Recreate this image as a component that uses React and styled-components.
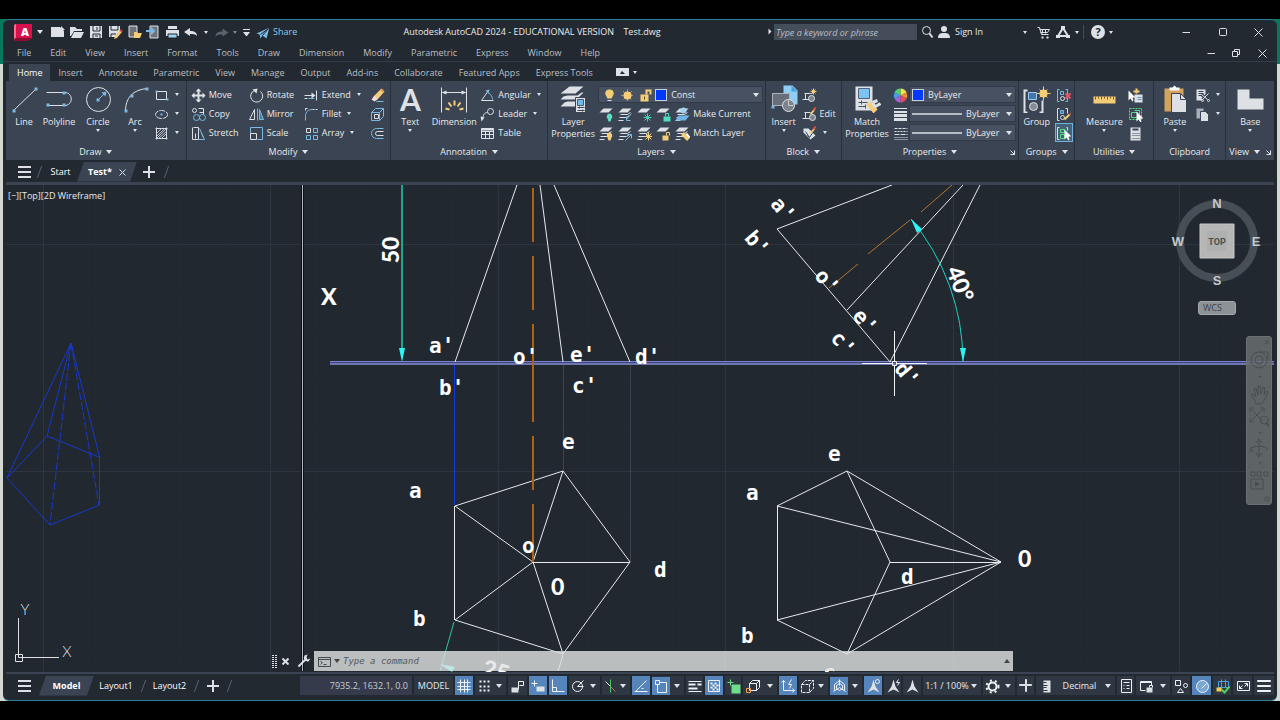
import styled, { createGlobalStyle, css } from 'styled-components';

const GlobalStyles = createGlobalStyle`
	* {
		box-sizing: border-box;
	}
	body {
		margin: 0;
		background: #000;
		color: #e8ebee;
		font-family: 'Open Sans', sans-serif;
		font-size: 9px;
		line-height: 12px;
	}
	button, input, select {
		font: inherit;
		color: inherit;
		background: none;
		border: none;
		padding: 0;
		margin: 0;
	}
	svg {
		display: block;
		flex: none;
	}
`;

const Desktop = styled.div`
	height: 100vh;
	display: flex;
	flex-direction: column;
	border: solid #000;
	border-width: 19px 0;
	padding: 0 3px;
	background: linear-gradient(#08785c 45px, #d3d8d0 45px);
`;

const Window = styled.div`
	flex: 1;
	min-height: 0;
	display: flex;
	flex-direction: column;
	background: #222930;
	border: solid #2c7f97;
	border-width: 1px 0;
	border-radius: 6px;
	overflow: hidden;
`;

const Row = styled.div`
	display: flex;
	align-items: center;
`;

const Caret = styled.i`
	flex: none;
	width: 0;
	height: 0;
	border: solid transparent;
	border-width: ${(p) => (p.$big ? '4px 3px 0' : '3px 2px 0')};
	border-top-color: #dfe2e6;
	opacity: ${(p) => (p.$dim ? 0.5 : 1)};
`;

/* title bar */

const TitleBar = styled.header`
	flex: none;
	height: 24px;
	display: flex;
	align-items: center;
	padding-left: 11px;
`;

const AppButton = styled.button`
	display: flex;
	align-items: center;
	width: 34px;
	gap: 4px;
`;

const ToolButton = styled.button`
	flex: none;
	display: flex;
	align-items: center;
	justify-content: center;
	gap: 4px;
	width: ${(p) => p.$w || 19}px;
	height: 18px;
`;

const ShareButton = styled.button`
	display: flex;
	align-items: center;
	gap: 4px;
	margin-left: 4px;
	color: #84cdf2;
`;

const SignInButton = styled.button`
	flex: none;
	width: 94px;
	display: flex;
	align-items: center;
	gap: 4px;
	padding: 0 4px 0 0;
	i {
		margin-left: auto;
	}
`;

const Title = styled.h1`
	flex: 1;
	margin: 0;
	font-size: 9px;
	font-weight: 400;
	text-align: center;
	white-space: pre;
`;

const SearchBox = styled.input`
	width: 143px;
	height: 16px;
	margin-left: 2px;
	padding: 0 2px;
	background: #454c5a;
	font-style: italic;
	&::placeholder {
		color: #b9bec6;
	}
`;

const Divider = styled.span`
	width: 1px;
	height: 14px;
	margin: 0 3px;
	background: #454c54;
`;

/* menu and ribbon tabs */

const MenuBar = styled.nav`
	flex: none;
	height: 18px;
	display: flex;
	align-items: center;
	gap: 19px;
	padding: 1px 0 0 14px;
	color: #b9bfc6;
	border-bottom: 1px solid #343c45;
`;

const WindowButtons = styled.div`
	margin-left: ${(p) => (p.$gap ? `${p.$gap}px` : 'auto')};
	display: flex;
	padding-right: 2px;
`;

const RibbonTabs = styled.div`
	flex: none;
	height: 19px;
	display: flex;
	align-items: flex-end;
	padding-left: 6px;
	color: #b9bfc6;
`;

const RibbonTab = styled.button`
	height: 17px;
	padding: 0 8px;
	${(p) =>
		p.$active &&
		css`
			background: #3b4453;
			color: #fff;
		`}
`;

/* ribbon */

const Ribbon = styled.div`
	flex: none;
	height: 79px;
	display: flex;
	margin: 0 3px;
	background: #3b4453;
`;

const PanelBox = styled.section`
	flex: ${(p) => p.$w} 1 0;
	min-width: 0;
	display: flex;
	flex-direction: column;
	border-right: 1px solid #29303a;
	&:last-child {
		border: none;
	}
`;

const PanelBody = styled.div`
	flex: 1;
	display: flex;
	padding: 4px 0 0 ${(p) => p.$pad}px;
`;

const PanelFooter = styled.div`
	height: 17px;
	display: flex;
	align-items: center;
	justify-content: ${(p) => (p.$start ? 'flex-start' : 'center')};
	padding-top: 1px;
	padding-left: ${(p) => (p.$start ? 3 : 0)}px;
	gap: 5px;
	position: relative;
`;

const Launcher = styled.button`
	position: absolute;
	right: 3px;
	top: 6px;
`;

const BigButton = styled.button`
	flex: none;
	width: ${(p) => p.$w}px;
	display: flex;
	flex-direction: column;
	align-items: center;
	align-self: flex-start;
	white-space: nowrap;
	svg {
		margin-bottom: 3px;
	}
	i {
		margin-top: 1px;
	}
`;

const Column = styled.div`
	flex: ${(p) => (p.$w ? `none` : 1)};
	width: ${(p) => (p.$w ? `${p.$w}px` : 'auto')};
	min-width: 0;
	display: flex;
	flex-direction: column;
`;

const SmallButton = styled.button`
	height: 19px;
	display: flex;
	align-items: center;
	gap: 3px;
	white-space: nowrap;
	i {
		margin-left: 3px;
	}
	${(p) =>
		p.$on &&
		css`
			background: #46617a;
			outline: 1px solid #6fb0dc;
			outline-offset: -1px;
		`}
`;

const Combo = styled.label`
	height: 17px;
	margin: 1px 2px 1px 0;
	display: flex;
	align-items: center;
	gap: 2px;
	padding: 0 3px 0 2px;
	background: #485161;
	border: 1px solid #323a47;
	select {
		flex: 1;
		min-width: 0;
		appearance: none;
		outline: none;
		padding-left: 2px;
	}
`;

const Swatch = styled.span`
	flex: none;
	width: 12px;
	height: 12px;
	background: #0038ff;
	border: 1px solid #c9ced6;
`;

const LineSample = styled.span`
	flex: none;
	width: 50px;
	height: 2px;
	background: #b6bbc5;
`;

/* file and layout tabs */

const TabStrip = styled.div`
	flex: none;
	height: 22px;
	display: flex;
	align-items: center;
	padding: 1px 0 0 12px;
`;

const SlantTab = styled.div`
	height: 20px;
	display: flex;
	align-items: center;
	justify-content: center;
	gap: 6px;
	width: ${(p) => p.$w}px;
	background: #3b4453;
	clip-path: polygon(7px 0, 100% 0, calc(100% - 7px) 100%, 0 100%);
	font-weight: 700;
	color: #fff;
`;

const PlainTab = styled.button`
	width: ${(p) => p.$w}px;
	text-align: center;
	color: #fff;
`;

const Slash = styled.span`
	flex: none;
	width: 1px;
	height: 12px;
	background: #59616b;
	transform: skewX(-20deg);
`;

/* drawing area */

const Canvas = styled.main`
	flex: 1;
	min-height: 0;
	position: relative;
	margin: 0 3px;
	overflow: hidden;
	border: solid #3b4453;
	border-width: 3px 0 2px;
	background: #212830;
`;

const Drawing = styled.svg`
	position: absolute;
	inset: 0;
	width: 100%;
	height: 100%;
`;

const ViewLabel = styled.span`
	position: absolute;
	left: 2px;
	top: 5px;
`;

const ViewCube = styled.svg`
	position: absolute;
	right: 10px;
	top: 8px;
`;

const WcsButton = styled.button`
	position: absolute;
	right: 38px;
	top: 116px;
	width: 38px;
	height: 14px;
	padding-left: 4px;
	border-radius: 3px;
	background: #8d9297;
	border: 1px solid #a4a8ac;
	color: #3d444b;
	line-height: 12px;
	text-align: left;
`;

const NavBar = styled.div`
	position: absolute;
	right: 2px;
	top: 151px;
	border-radius: 3px;
	border: 1px solid #6b7073;
	background: rgba(101, 106, 108, 0.9);
`;

const CommandBar = styled.div`
	position: absolute;
	left: 266px;
	right: 261px;
	bottom: 1px;
	height: 20px;
	display: flex;
	align-items: center;
`;

const CommandField = styled.div`
	flex: 1;
	height: 20px;
	display: flex;
	align-items: center;
	gap: 3px;
	padding: 0 3px;
	background: rgba(226, 227, 226, 0.8);
	input {
		flex: 1;
		outline: none;
		font-family: 'DejaVu Sans Mono', monospace;
		font-size: 9px;
		font-style: italic;
		color: #333;
	}
	input::placeholder {
		color: #55595c;
	}
	i {
		border-top-color: #444;
	}
	i:last-child {
		transform: rotate(180deg);
	}
`;

/* status bar */

const StatusBar = styled.footer`
	flex: none;
	height: 26px;
	display: flex;
	align-items: center;
	padding: 0 3px 3px 12px;
`;

const StatusItems = styled.div`
	margin-left: auto;
	display: flex;
	gap: 2px;
`;

const StatusItem = styled.button`
	flex: none;
	width: ${(p) => p.$w}px;
	height: 19px;
	display: flex;
	align-items: center;
	justify-content: ${(p) => (p.$caret ? 'space-between' : 'center')};
	padding-right: ${(p) => (p.$caret ? '4px' : 0)};
	white-space: nowrap;
	background: ${(p) => (p.$on && !p.$caret ? '#5585bb' : '#2f3742')};
	> svg {
		width: 18px;
		height: 18px;
		background: ${(p) => (p.$on ? '#5585bb' : 'none')};
	}
	> span {
		margin: 0 auto;
	}
`;

const Coords = styled.output`
	width: 112px;
	height: 19px;
	padding-right: 4px;
	line-height: 19px;
	text-align: right;
	background: #353b4b;
	color: #c7ccd3;
`;

/* icons */

const W = '#dde1e5';
const B = '#79b9e4';
const Y = '#f5cd76';

// odd-width strokes sit on whole coordinates, so the view is shifted by half a unit
const Icon = ({ w = 16, h = 16, shift = 0.5, children }) => (
	<svg
		width={w}
		height={h}
		viewBox={`${-shift} ${-shift} ${w} ${h}`}
		fill="none"
		stroke={W}
		aria-hidden="true"
	>
		{children}
	</svg>
);

const Logo = () => (
	<Icon w={19} h={17} shift={0}>
		<path d="M1 0h17v14l-4 2H1z" fill="#d8114c" stroke="none" />
		<path d="M0 1l2-1v14l-2 2z" fill="#ff6b8f" stroke="none" />
		<path d="M1 14h17l-4 3H0z" fill="#8e0c30" stroke="none" />
		<text
			x="11"
			y="12"
			fill="#fff"
			stroke="none"
			fontSize="11"
			fontWeight="800"
			textAnchor="middle"
		>
			A
		</text>
	</Icon>
);

const quick = {
	New: <path d="M1 3h9l4 4v6H1zM11 2l4 4h-4z" fill={W} stroke="none" />,
	Open: (
		<>
			<path d="M1 3h5l2 2h5v2H5l-3 5H1z" fill={W} stroke="none" />
			<path d="M5 8h10l-3 6H2z" fill={W} stroke="none" />
		</>
	),
	Save: (
		<>
			<path d="M2 2h12v12H2z" fill={W} stroke="none" />
			<path d="M5 2v5h7V2M5 14v-4h7v4" stroke="#222930" />
			<path d="M9 3v3M7 12h3" stroke="#222930" />
		</>
	),
	'Save As': (
		<>
			<path d="M2 2h11v5l-5 6H2z" fill={W} stroke="none" />
			<path d="M4 2v4h7V2M4 14v-4h5" stroke="#222930" />
			<path d="M13 6l2 2-5 6-3 1 1-3z" fill={Y} stroke="none" />
			<path d="M13 6l2 2" stroke="#e5513d" strokeWidth="2" />
		</>
	),
	'Open from Web': (
		<>
			<path d="M3 2h8v11H3z" fill="#6d747c" stroke={W} />
			<path d="M8 8h3l1 1h4l-2 5H8z" fill={Y} stroke="none" />
		</>
	),
	'Save to Web': (
		<>
			<path d="M5 2h8v12H5z" fill="#6d747c" stroke={W} />
			<path d="M1 7h7M6 4l3 3-3 3" stroke={B} strokeWidth="2" />
		</>
	),
	Plot: (
		<>
			<path d="M4 2h9v3H4z" fill={W} stroke="none" />
			<path d="M2 6h13v6H2z" fill={W} stroke="none" />
			<path d="M4 10h9v4H4z" fill="#9cd3f5" stroke="#222930" />
		</>
	),
	Undo: (
		<path
			d="M1 8l6-4v3c5 0 7 2 7 5-2-2-4-2-7-2v2z"
			fill={W}
			stroke="none"
		/>
	),
};

const big = {
	line: (
		<Icon w={28} h={28}>
			<path d="M3 25L26 3" />
			<path d="M2 24h3v3H2zM24 2h3v3h-3z" fill={B} stroke="none" />
		</Icon>
	),
	polyline: (
		<Icon w={28} h={28}>
			<path d="M2 20h17c9 0 9-13 0-13H1" />
			<path
				d="M1 18h3v3H1zM17 18h3v3h-3zM17 6h3v3h-3z"
				fill={B}
				stroke="none"
			/>
		</Icon>
	),
	circle: (
		<Icon w={28} h={28}>
			<circle cx="14" cy="14" r="12" />
			<path d="M14 14l6-6" stroke={B} />
			<path d="M12 13h3v3h-3zM22 6l-5 1 4 4z" fill={B} stroke="none" />
		</Icon>
	),
	arc: (
		<Icon w={28} h={28}>
			<path d="M4 25C4 13 11 4 26 3" />
			<path
				d="M3 24h3v3H3zM9 9h3v3H9zM24 2h3v3h-3z"
				fill={B}
				stroke="none"
			/>
		</Icon>
	),
	text: (
		<Icon w={28} h={28}>
			<text
				x="14"
				y="25"
				fill={W}
				stroke="none"
				fontFamily="Lato, sans-serif"
				fontSize="30"
				fontWeight="700"
				textAnchor="middle"
			>
				A
			</text>
		</Icon>
	),
	dimension: (
		<Icon w={28} h={28}>
			<path d="M1 2v25M26 2v25M3 7h22" />
			<path d="M1 7l5-2v4zM26 7l-5-2v4z" fill={W} stroke="none" />
			<path
				d="M14 15v5M8 17l3 4M20 17l-3 4M5 23l4 1M23 23l-4 1"
				stroke={Y}
				strokeWidth="2"
			/>
		</Icon>
	),
	layers: (
		<Icon w={28} h={28}>
			<path
				d="M10 1h14l-8 7H1zM8 10h10l4-3h2l-7 7H1l3-3zM8 16h8v5H1l4-4z"
				fill={W}
				stroke="none"
			/>
			<path d="M16 12h10v15H16z" fill={W} stroke="#3b4453" />
			<path d="M18 14h6v6h-6z" fill="#6dbcf0" stroke="#4c5867" />
			<path d="M18 22h7M18 25h7M20 21v2M23 24v2" stroke="#3b4453" />
		</Icon>
	),
	insert: (
		<Icon w={28} h={28}>
			<path d="M13 0h9l5 5v14H13z" fill="#8fcdf5" stroke="none" />
			<path d="M21 0l6 6h-6z" fill="#4e9fd4" stroke="none" />
			<path d="M2 8h17v12H2z" fill="#686f7a" stroke="#aeb3bb" />
			<circle cx="18" cy="20" r="6" fill="#7d838d" stroke={W} />
			<path d="M18 15v5h5" stroke="#c9ced4" />
			<path d="M1 20h3v3H1z" fill={B} stroke="none" />
		</Icon>
	),
	match: (
		<Icon w={28} h={28}>
			<path d="M2 1h17v24H2z" fill={W} stroke="none" />
			<path d="M5 3h11v10H5z" fill="#7cc4f3" stroke="#566070" />
			<path d="M5 17h9M5 21h7M8 15v4M12 19v4" stroke="#4a5361" />
			<path d="M13 19l5-3 6 8-4 4z" fill={Y} stroke="none" />
			<path d="M19 17l3 5M19 17l5-2M22 21l5-3" strokeWidth="3" />
		</Icon>
	),
	group: (
		<Icon w={28} h={28}>
			<path d="M4 5H1v22h3M16 27h3V15" strokeWidth="2" />
			<path d="M5 7h8v7H5z" fill="#3f78ad" stroke="#9ccbed" />
			<circle cx="10" cy="21" r="4" fill="#858c95" stroke={W} />
			<circle cx="20" cy="8" r="4" fill={Y} stroke="none" />
			<path
				d="M20 1v14M13 8h14M16 4l8 8M24 4l-8 8"
				stroke={Y}
			/>
		</Icon>
	),
	measure: (
		<Icon w={28} h={28}>
			<path d="M3 11h22v7H3z" fill={Y} stroke="none" />
			<path
				d="M5 11v3M8 11v2M11 11v3M14 11v2M17 11v3M20 11v2M23 11v3"
				stroke="#75602d"
			/>
		</Icon>
	),
	paste: (
		<Icon w={28} h={28}>
			<path d="M3 3h19v23H3z" fill="#d1a35d" stroke="none" />
			<path d="M8 5V2h3l2-2 2 2h3v3z" fill="#fff" stroke="none" />
			<path d="M10 8h9l6 6v13H10z" fill={W} stroke="#3b4453" />
			<path d="M19 8v6h6" stroke="#3b4453" />
		</Icon>
	),
	base: (
		<Icon w={28} h={28}>
			<path d="M1 4h12v9h14v11H1z" fill={W} stroke="none" />
		</Icon>
	),
};

const small = {
	rect: (
		<Icon>
			<path d="M3 4h10v8H3z" />
			<path d="M2 3h2v2H2zM13 11h2v2h-2z" fill={B} stroke="none" />
		</Icon>
	),
	ellipse: (
		<Icon>
			<ellipse cx="8" cy="8" rx="6" ry="4" strokeDasharray="6 1" />
			<path d="M7 7h2v2H7z" fill={B} stroke="none" />
		</Icon>
	),
	hatch: (
		<Icon>
			<path d="M3 2v12M13 2v12M2 3h12M2 13h12" />
			<path d="M3 8l5-5M3 13L13 3M8 13l5-5M5 13L13 6M3 11l8-8" stroke="#b8bec5" />
		</Icon>
	),
	move: (
		<Icon>
			<path d="M8 2v12M2 8h12" strokeWidth="2" />
			<path
				d="M8 1l3 3H5zM8 15l3-3H5zM1 8l3-3v6zM15 8l-3-3v6z"
				fill={W}
				stroke="none"
			/>
		</Icon>
	),
	copy: (
		<Icon>
			<circle cx="4" cy="4" r="2" />
			<path d="M8 2h5v4H9M13 4v4" />
			<circle cx="6" cy="11" r="3" stroke={B} />
			<circle cx="12" cy="11" r="3" stroke={B} />
		</Icon>
	),
	stretch: (
		<Icon>
			<path d="M3 2h5v12H2V2M5 8v5" />
			<path d="M9 3l5 11H8M11 8l2 4" stroke={B} />
		</Icon>
	),
	rotate: (
		<Icon>
			<path d="M6 3a6 6 0 1 0 6 1" />
			<path d="M9 1L4 2l4 4z" fill={W} stroke="none" />
		</Icon>
	),
	mirror: (
		<Icon>
			<path d="M6 3v10H1z" />
			<path d="M9 2v12M11 3l4 10h-4z" stroke={B} fill="#467da5" />
		</Icon>
	),
	scale: (
		<Icon>
			<path d="M2 8V2h12v12H9" stroke={B} />
			<path d="M2 8h6v6H2z" />
		</Icon>
	),
	extend: (
		<Icon>
			<path d="M1 8h9M13 3v10M1 11h3" />
			<path d="M8 5l4 3-4 3z" fill={W} stroke="none" />
			<path d="M5 11h6" stroke={B} />
		</Icon>
	),
	fillet: (
		<Icon>
			<path d="M2 14V10c0-5 3-7 7-7" stroke={B} />
			<path d="M9 3h6M2 2v3M2 2h3" strokeDasharray="2 1" />
		</Icon>
	),
	array: (
		<Icon>
			<path d="M3 3h4v4H3z" />
			<path d="M10 3h4v4h-4zM3 10h4v4H3zM10 10h4v4h-4z" stroke={B} />
		</Icon>
	),
	erase: (
		<Icon>
			<path d="M12 1l3 3-7 8-4-3z" fill={Y} stroke="none" />
			<path d="M5 8l3 4-3 2-3-2z" fill="#f3dcdc" stroke="none" />
			<path d="M12 2l2 2" stroke="#e5813d" strokeWidth="2" />
			<path d="M7 14h7" stroke={B} />
		</Icon>
	),
	explode: (
		<Icon>
			<path d="M2 6h8v8H2zM2 6l4-4h8v8l-4 4M10 6l4-4" stroke={B} />
			<path d="M5 8h4v4H5z" />
		</Icon>
	),
	offset: (
		<Icon>
			<path d="M14 3H7a5 5 0 0 0 0 10h7" stroke={B} />
			<path d="M14 6H8a2 2 0 0 0 0 4h6" />
		</Icon>
	),
	angular: (
		<Icon>
			<path d="M2 13h12M2 13L9 3" />
			<path d="M8 5c3 1 5 4 5 7" stroke={B} />
			<path d="M6 3l4-1-1 4z" fill={B} stroke="none" />
		</Icon>
	),
	leader: (
		<Icon>
			<circle cx="11" cy="5" r="3" />
			<path d="M8 6c-3 0-4 2-5 6" />
			<path d="M1 10l4 1-3 4z" fill={W} stroke="none" />
		</Icon>
	),
	table: (
		<Icon>
			<path d="M2 3h12v10H2zM2 6h12M2 9h12M6 6v7M10 6v7" />
			<path d="M2 3h12v2H2z" fill={W} stroke="none" />
		</Icon>
	),
	bulb: (
		<Icon>
			<path d="M8 2a4 4 0 0 1 3 7l-1 2H6L5 9a4 4 0 0 1 3-7z" fill={Y} stroke="none" />
			<path d="M6 13h4" />
		</Icon>
	),
	sun: (
		<Icon>
			<circle cx="8" cy="8" r="4" fill={Y} stroke="none" />
			<path d="M8 2v12M2 8h12M4 4l8 8M12 4l-8 8" stroke={Y} strokeDasharray="1 1" />
		</Icon>
	),
	unlock: (
		<Icon>
			<path d="M3 7h8v7H3z" fill={Y} stroke="none" />
			<path d="M9 7V3h4v4" stroke={Y} strokeWidth="2" />
			<path d="M7 9v3" stroke="#5b4a20" />
		</Icon>
	),
	wheel: (
		<Icon>
			<g stroke="none">
				<path d="M8 8V1a7 7 0 0 1 6 4z" fill="#f3e24a" />
				<path d="M8 8l6-3a7 7 0 0 1 0 6z" fill="#f48b37" />
				<path d="M8 8l6 3a7 7 0 0 1-6 4z" fill="#ea4b55" />
				<path d="M8 8v7a7 7 0 0 1-6-4z" fill="#a561d8" />
				<path d="M8 8l-6 3a7 7 0 0 1 0-6z" fill="#459cf0" />
				<path d="M8 8L2 5a7 7 0 0 1 6-4z" fill="#55cc76" />
			</g>
		</Icon>
	),
	weight: (
		<Icon shift={0}>
			<path d="M2 2h13v1H2zM2 5h13v2H2zM2 8h13v3H2zM2 12h13v3H2z" fill={W} stroke="none" />
		</Icon>
	),
	ltype: (
		<Icon>
			<path d="M2 3h13" strokeDasharray="3 1" />
			<path d="M2 6h13" strokeDasharray="2 1" />
			<path d="M2 9h13" strokeDasharray="5 1" />
			<path d="M2 12h13M2 14h13" strokeDasharray="1 1" />
		</Icon>
	),
	create: (
		<Icon>
			<path d="M3 6h6M4 6v6M1 12h8M9 6h2" />
			<circle cx="10" cy="11" r="3" fill="#7d838d" />
			<path d="M12 1v6M9 4h6M10 2l4 4M14 2l-4 4" stroke={Y} />
		</Icon>
	),
	edit: (
		<Icon>
			<path d="M3 6h6M4 6v6M1 12h8" />
			<circle cx="11" cy="11" r="3" fill="#7d838d" />
			<path d="M13 3l-4 5" stroke={Y} strokeWidth="2" />
			<path d="M14 1l-2 3" stroke="#e5513d" strokeWidth="2" />
		</Icon>
	),
	attr: (
		<Icon>
			<path d="M2 3h5l7 7-5 4-7-7z" fill={W} stroke="none" />
			<path d="M4 6l4 6M6 10l2 2 4-6" stroke="#3b4453" />
			<path d="M13 3l-4 5" stroke={Y} strokeWidth="2" />
			<path d="M14 1l-2 3" stroke="#e5513d" strokeWidth="2" />
		</Icon>
	),
	ungroup: (
		<Icon>
			<path d="M4 2H2v12h2M10 2h2v12h-2" stroke={B} />
			<path d="M5 4h3v3H5z" stroke={B} />
			<circle cx="7" cy="11" r="2" />
			<path d="M10 6l5 5M15 6l-5 5" stroke="#e65363" strokeWidth="2" />
		</Icon>
	),
	groupEdit: (
		<Icon>
			<path d="M4 2H2v12h2M10 2h2v5" />
			<path d="M5 4h3v3H5z" stroke={B} fill="#3f78ad" />
			<circle cx="7" cy="11" r="2" />
			<path d="M14 8l-5 5" stroke={Y} strokeWidth="2" />
			<path d="M14 7l1 1" stroke="#e5513d" strokeWidth="2" />
		</Icon>
	),
	groupSel: (
		<Icon>
			<path d="M4 2H2v12h2M11 2h1v3" />
			<path d="M5 4h4v3H5zM5 9h4v4H5z" stroke="#54dd7c" />
			<path d="M9 4v10l2-2 2 3 1-1-1-3h3z" fill="#fff" stroke="none" />
		</Icon>
	),
	quickSel: (
		<Icon>
			<path d="M7 7h8v8H7z" fill={W} stroke="none" />
			<path d="M6 4h6M9 1v5" stroke={Y} strokeWidth="2" />
			<path d="M1 3v10l2-2 2 3 1-1-1-3h3z" fill="#fff" stroke="none" />
			<path d="M10 10h4M10 12h4" stroke="#5c94c0" />
		</Icon>
	),
	selAll: (
		<Icon>
			<path d="M2 2h12v11H2z" stroke="#4fe07d" strokeDasharray="2 1" />
			<path d="M4 6h6v5H4zM7 4h5v4" stroke="#4fe07d" />
			<path d="M9 5v10l2-2 2 3 1-1-1-3h3z" fill="#fff" stroke="none" />
		</Icon>
	),
	calc: (
		<Icon>
			<path d="M3 2h10v13H3z" fill={W} stroke="none" />
			<path d="M5 4h6" stroke="#3b4453" strokeWidth="2" />
			<path d="M5 8h7M5 10h7M5 13h7" stroke="#3b4453" strokeDasharray="1 1" />
		</Icon>
	),
	cut: (
		<Icon>
			<path d="M2 2h9v8l-3 3H2z" fill={W} stroke="none" />
			<path d="M4 4h5M4 6h5M4 8h3" stroke="#3b4453" />
			<path d="M7 7l6 5M14 6l-6 6" stroke="#3b4453" strokeWidth="3" />
			<path d="M7 7l6 5M14 6l-6 6" />
			<circle cx="8" cy="13" r="1" />
			<circle cx="14" cy="13" r="1" />
		</Icon>
	),
	pages: (
		<Icon>
			<path d="M2 2h7v3H6v7H2z" fill="#aab0b8" stroke="none" />
			<path d="M6 5h5l3 3v7H6z" fill={W} stroke="#3b4453" />
		</Icon>
	),
};

const LayerIcon = ({ full, mark }) => (
	<Icon>
		<path d="M5 2h9l-4 4H1z" fill={W} stroke="none" />
		{full && (
			<path d="M3 8h7l3-2M2 11h7l3-2M1 14h5" strokeWidth="1" />
		)}
		{mark}
	</Icon>
);

const bulbMark = (c) => (
	<path d="M11 7a3 3 0 0 1 2 5l-1 3h-2l-1-3a3 3 0 0 1 2-5z" fill={c} stroke="none" />
);

const layerRows = [
	[
		['Off', <LayerIcon mark={bulbMark('#5fe0c4')} />],
		['Isolate', <LayerIcon full mark={<path d="M14 7l-5 6M9 10v4h4" stroke={B} />} />],
		[
			'Freeze',
			<LayerIcon
				mark={<path d="M11 7v8M7 11h8M8 8l6 6M14 8l-6 6" stroke="#41cfb8" />}
			/>,
		],
		[
			'Lock',
			<LayerIcon
				mark={
					<>
						<path d="M8 10h7v5H8z" fill="#4fdcc0" stroke="none" />
						<path d="M10 10V7h3v3" stroke="#4fdcc0" />
					</>
				}
			/>,
		],
		[
			'Make Current',
			<LayerIcon
				full
				mark={
					<>
						<path d="M4 9h11l-4 5H1z" fill="#6eb5e5" stroke="none" />
						<circle cx="9" cy="4" r="3" fill="#9ed4f5" stroke="none" />
					</>
				}
			/>,
		],
	],
	[
		['Turn All On', <LayerIcon full mark={bulbMark(Y)} />],
		['Unisolate', <LayerIcon full mark={<path d="M8 15l6-6M10 9h4v4" stroke={B} />} />],
		[
			'Thaw',
			<LayerIcon
				full
				mark={
					<>
						<circle cx="12" cy="11" r="2" fill={Y} stroke="none" />
						<path d="M12 7v8M8 11h8M9 8l6 6M15 8l-6 6" stroke={Y} />
					</>
				}
			/>,
		],
		[
			'Unlock',
			<LayerIcon
				mark={
					<>
						<path d="M7 10h6v5H7z" fill={Y} stroke="none" />
						<path d="M11 10V7h3v3" stroke={Y} />
					</>
				}
			/>,
		],
		[
			'Match Layer',
			<LayerIcon
				full
				mark={
					<>
						<path d="M8 8l6 6" stroke={Y} strokeWidth="4" />
						<path d="M12 8l3 4" stroke="#fff" strokeWidth="2" />
					</>
				}
			/>,
		],
	],
];

const Plus = ({ s = 12 }) => (
	<Icon w={s} h={s} shift={0}>
		<path d={`M${s / 2} 0v${s}M0 ${s / 2}h${s}`} strokeWidth="2" />
	</Icon>
);

const Burger = () => (
	<Icon w={14} h={12} shift={0}>
		<path d="M0 1h13M0 6h13M0 11h13" strokeWidth="2" />
	</Icon>
);

const SIcon = ({ children }) => (
	<svg viewBox="-0.5 -0.5 18 18" fill="none" stroke="#eef1f4" aria-hidden="true">
		{children}
	</svg>
);

const person = 'M9 2l2 7 4 6-6-3-6 3 4-6z';

const statusItems = [
	{ n: 'Grid', w: 18, on: 1, i: <path d="M5 2v13M9 2v13M12 2v13M2 5h13M2 9h13M2 12h13" /> },
	{
		n: 'Snap',
		w: 31,
		c: 1,
		i: <path d="M4 4h12M4 9h12M4 13h12" strokeWidth="2" strokeDasharray="2 2" />,
	},
	{
		n: 'Infer constraints',
		w: 19,
		i: (
			<>
				<path d="M9 12V4h5v4h-4" />
				<path d="M2 10h7v5H2z" fill={W} stroke="none" />
			</>
		),
	},
	{
		n: 'Dynamic input',
		w: 18,
		on: 1,
		i: (
			<>
				<path d="M2 6h6M5 3v6" />
				<path d="M7 9h8v5H7z" fill={W} stroke="none" />
			</>
		),
	},
	{ n: 'Ortho', w: 18, on: 1, i: <path d="M3 2v12h12M3 10h4v4" /> },
	{
		n: 'Polar',
		w: 31,
		c: 1,
		i: (
			<>
				<circle cx="8" cy="9" r="5" />
				<path d="M8 9h6M8 9l6-6" />
			</>
		),
	},
	{
		n: 'Isometric',
		w: 28,
		c: 1,
		i: (
			<>
				<path d="M8 2v13" stroke="#48c768" />
				<path d="M3 4l5 5" />
				<path d="M8 9l5 5" stroke="#d35b5b" />
			</>
		),
	},
	{ n: 'Object snap tracking', w: 18, on: 1, i: <path d="M2 14h13M3 14L14 3M9 11h2" /> },
	{
		n: 'Object snap',
		w: 32,
		on: 1,
		c: 1,
		i: (
			<>
				<path d="M5 5h9v10H5z" />
				<path d="M3 3h4v4H3z" fill="#5585bb" />
			</>
		),
	},
	{
		n: 'Lineweight',
		w: 17,
		i: (
			<>
				<path d="M2 4h13M2 14h13" />
				<path d="M2 7h7M11 7h4M2 11h9" strokeWidth="2" />
			</>
		),
	},
	{
		n: 'Transparency',
		w: 18,
		on: 1,
		i: (
			<>
				<path d="M3 3h11v11H3z" />
				<path d="M5 6h8M5 10h8" strokeDasharray="2 2" strokeWidth="2" />
				<path d="M7 8h7M7 12h7" strokeDasharray="2 2" strokeWidth="2" />
			</>
		),
	},
	{
		n: 'Selection cycling',
		w: 16,
		i: (
			<>
				<path d="M7 7h9v9H7z" fill="#6fdc8b" stroke="none" />
				<path d="M3 5h6M6 2v6" stroke="#6fdc8b" />
			</>
		),
	},
	{
		n: '3D object snap',
		w: 34,
		c: 1,
		i: (
			<>
				<path d="M6 6h7v7H6zM6 6l3-3h7v7l-3 3M13 6l3-3" />
				<path d="M3 11h4v4H3z" stroke="#f0a04a" />
			</>
		),
	},
	{
		n: 'Dynamic UCS',
		w: 18,
		on: 1,
		i: (
			<>
				<path d="M4 3v10h11M2 5l2-2 2 2M13 11l2 2-2 2" />
				<path d="M12 2l-3 5h3l-2 4" />
			</>
		),
	},
	{
		n: 'Selection filtering',
		w: 29,
		c: 1,
		i: <path d="M2 7h8v8H2zM2 7l4-4h8v8l-4 4M10 7l4-4" strokeDasharray="3 1" />,
	},
	{
		n: 'Gizmo',
		w: 32,
		on: 1,
		c: 1,
		i: <path d="M9 2v6M9 10l-6 4M9 10l6 4M9 3l5 4v6M4 13V7l5-4M9 6l3 2v3l-3 2-3-2V8z" />,
	},
	{
		n: 'Annotation visibility',
		w: 18,
		on: 1,
		i: (
			<>
				<path d={person} fill={W} stroke="none" />
				<circle cx="13" cy="4" r="2" />
			</>
		),
	},
	{
		n: 'AutoScale',
		w: 17,
		i: (
			<>
				<path d={person} fill={W} stroke="none" />
				<path d="M14 2l-2 3h3l-2 3" />
			</>
		),
	},
	{ n: 'Annotation', w: 18, i: <path d={person} fill={W} stroke="none" /> },
	{ n: 'Annotation scale', w: 58, c: 1, t: '1:1 / 100%' },
	{
		n: 'Workspace switching',
		w: 32,
		c: 1,
		i: (
			<>
				<circle cx="9" cy="9" r="4" strokeWidth="2" />
				<circle cx="9" cy="9" r="6" strokeWidth="2" strokeDasharray="2 3" />
			</>
		),
	},
	{
		n: 'Annotation monitor',
		w: 17,
		i: <path d="M8 2h1v5h5v1H9v6H8V8H2V7h6z" fill={W} stroke={W} />,
	},
	{
		n: 'Units',
		w: 79,
		c: 1,
		t: 'Decimal',
		i: (
			<>
				<path d="M7 3h7v12H7z" fill={W} stroke="none" />
				<path d="M7 5h3M7 8h4M7 10h3M7 13h4" stroke="#2f3742" />
			</>
		),
	},
	{ n: 'Quick properties', w: 17, i: <path d="M4 2h10v13H4zM6 5h6M6 8h1M9 8h3M6 11h1M9 11h3" /> },
	{
		n: 'Lock UI',
		w: 34,
		c: 1,
		i: (
			<>
				<path d="M9 13H4V4h11v4M4 5h11" />
				<path d="M10 10h6v5h-6z" fill={W} stroke="none" />
				<path d="M13 10V8h3v2" />
			</>
		),
	},
	{
		n: 'Isolate objects',
		w: 18,
		i: (
			<>
				<path d="M3 3h5v5H3zM8 11l3 4H5z" />
				<circle cx="13" cy="8" r="2" />
			</>
		),
	},
	{
		n: 'Hardware acceleration',
		w: 19,
		on: 1,
		i: (
			<>
				<circle cx="9" cy="9" r="6" fill="#7ba8d3" />
				<path d="M8 11l5-5" />
			</>
		),
	},
	{
		n: 'Trusted autodesk dwg',
		w: 18,
		i: (
			<>
				<path d="M5 4h10v6H5zM8 2v10M12 2v8" stroke="#4aa2e2" />
				<path d="M3 10h5v4H3z" fill="#f0cc4c" stroke="none" />
				<path d="M8 12l3 3 5-6" stroke="#58cc5c" strokeWidth="2" />
			</>
		),
	},
	{ n: 'Clean screen', w: 19, i: <path d="M3 4h12v9H3zM10 6h3v3M8 11H5V8M10 9l3-3M8 8l-3 3" /> },
	{
		n: 'Customization',
		w: 20,
		i: <path d="M2 3h13v1H2zM2 8h13v1H2zM2 13h13v1H2z" fill={W} />,
	},
];

const menus = [
	'File',
	'Edit',
	'View',
	'Insert',
	'Format',
	'Tools',
	'Draw',
	'Dimension',
	'Modify',
	'Parametric',
	'Express',
	'Window',
	'Help',
];

const tabs = [
	'Home',
	'Insert',
	'Annotate',
	'Parametric',
	'View',
	'Manage',
	'Output',
	'Add-ins',
	'Collaborate',
	'Featured Apps',
	'Express Tools',
];

const Panel = ({ w, pad = 0, title, caret = true, launcher, start, children }) => (
	<PanelBox $w={w}>
		<PanelBody $pad={pad}>{children}</PanelBody>
		<PanelFooter $start={start}>
			{title}
			{caret && <Caret $big />}
			{launcher && (
				<Launcher aria-label={`${title} settings`}>
					<Icon w={6} h={6}>
						<path d="M1 1l4 4M5 1v4H1" />
					</Icon>
				</Launcher>
			)}
		</PanelFooter>
	</PanelBox>
);

const Big = ({ w, icon, label, caret }) => (
	<BigButton $w={w}>
		{big[icon]}
		{label.split('\n').map((line) => (
			<span key={line}>{line}</span>
		))}
		{caret && <Caret />}
	</BigButton>
);

const Small = ({ icon, label, caret, on }) => (
	<SmallButton $on={on} aria-label={label || icon}>
		{small[icon]}
		{label}
		{caret && <Caret />}
	</SmallButton>
);

const ByLayer = ({ label, children }) => (
	<Combo>
		{children}
		<select aria-label={label}>
			<option>ByLayer</option>
		</select>
		<Caret $big />
	</Combo>
);

const RibbonPanels = () => (
	<Ribbon>
		<Panel w={181} pad={3} title="Draw">
			<Big w={30} icon="line" label="Line" />
			<Big w={40} icon="polyline" label="Polyline" />
			<Big w={38} icon="circle" label="Circle" caret />
			<Big w={36} icon="arc" label="Arc" caret />
			<Column>
				<Small icon="rect" caret />
				<Small icon="ellipse" caret />
				<Small icon="hatch" caret />
			</Column>
		</Panel>
		<Panel w={205} pad={3} title="Modify">
			<Column $w={58}>
				<Small icon="move" label="Move" />
				<Small icon="copy" label="Copy" />
				<Small icon="stretch" label="Stretch" />
			</Column>
			<Column $w={55}>
				<Small icon="rotate" label="Rotate" />
				<Small icon="mirror" label="Mirror" />
				<Small icon="scale" label="Scale" />
			</Column>
			<Column $w={66}>
				<Small icon="extend" label="Extend" caret />
				<Small icon="fillet" label="Fillet" caret />
				<Small icon="array" label="Array" caret />
			</Column>
			<Column>
				<Small icon="erase" />
				<Small icon="explode" />
				<Small icon="offset" />
			</Column>
		</Panel>
		<Panel w={157} title="Annotation">
			<Big w={38} icon="text" label="Text" caret />
			<Big w={50} icon="dimension" label="Dimension" />
			<Column>
				<Small icon="angular" label="Angular" caret />
				<Small icon="leader" label="Leader" caret />
				<Small icon="table" label="Table" />
			</Column>
		</Panel>
		<Panel w={218} title="Layers">
			<Big w={50} icon="layers" label={'Layer\nProperties'} />
			<Column>
				<Combo>
					{small.bulb}
					{small.sun}
					{small.unlock}
					<Swatch />
					<select aria-label="Layer">
						<option>Const</option>
					</select>
					<Caret $big />
				</Combo>
				{layerRows.map((row, r) => (
					<Row key={r}>
						{row.map(([name, icon], i) => (
							<SmallButton key={name} aria-label={name}>
								{icon}
								<span>{i === 4 && name}</span>
							</SmallButton>
						))}
					</Row>
				))}
			</Column>
		</Panel>
		<Panel w={76} pad={1} title="Block">
			<Big w={34} icon="insert" label="Insert" caret />
			<Column>
				<Small icon="create" />
				<Small icon="edit" label="Edit" />
				<Small icon="attr" caret />
			</Column>
		</Panel>
		<Panel w={177} title="Properties" launcher>
			<Big w={50} icon="match" label={'Match\nProperties'} />
			<Column $w={17}>
				<Small icon="wheel" />
				<Small icon="weight" />
				<Small icon="ltype" />
			</Column>
			<Column>
				<ByLayer label="Object color">
					<Swatch />
				</ByLayer>
				<ByLayer label="Lineweight">
					<LineSample />
				</ByLayer>
				<ByLayer label="Linetype">
					<LineSample />
				</ByLayer>
			</Column>
		</Panel>
		<Panel w={56} title="Groups">
			<Big w={36} icon="group" label="Group" />
			<Column $w={18}>
				<Small icon="ungroup" />
				<Small icon="groupEdit" />
				<Small icon="groupSel" on />
			</Column>
		</Panel>
		<Panel w={78} pad={6} title="Utilities">
			<Big w={46} icon="measure" label="Measure" caret />
			<Column $w={20}>
				<Small icon="quickSel" />
				<Small icon="selAll" />
				<Small icon="calc" />
			</Column>
		</Panel>
		<Panel w={72} pad={2} title="Clipboard" caret={false}>
			<Big w={38} icon="paste" label="Paste" caret />
			<Column $w={28}>
				<Small icon="cut" caret />
				<Small icon="pages" caret />
			</Column>
		</Panel>
		<Panel w={48} title="View" launcher start>
			<Big w={48} icon="base" label="Base" caret />
		</Panel>
	</Ribbon>
);

const gridMajor = { v: [43, 270, 498, 725, 953, 1179], h: [244, 471] };
const gridMinor = Array.from({ length: 28 }, (_, i) => 43 + Math.round(i * 45.4));

const labels = [
	[429, 353, "a'"],
	[439, 395, "b'"],
	[513, 364, "o'"],
	[570, 362, "e'"],
	[635, 364, "d'"],
	[572, 393, "c'"],
	[562, 449, 'e'],
	[409, 498, 'a'],
	[413, 626, 'b'],
	[522, 553, 'o'],
	[654, 577, 'd'],
	[828, 461, 'e'],
	[746, 500, 'a'],
	[741, 643, 'b'],
	[901, 584, 'd'],
	[823, 680, 'c'],
];

const apexLabels = [
	[551, 595, '0'],
	[1018, 567, '0'],
	[321, 305, 'X'],
];

const turned = [
	[778, 205, "a'"],
	[752, 239, "b'"],
	[822, 277, "o'"],
	[860, 317, "e'"],
	[838, 339, "c'"],
	[902, 370, "d'"],
];

const Pyramid = () => (
	<Drawing role="img" aria-label="Drawing">
		<g transform="translate(-6 -185)" fill="none">
			<g stroke="#232a32">
				{gridMinor.map((p) => (
					<path key={p} d={`M${p}.5 185V671M6 ${p + 19}.5H1274`} />
				))}
			</g>
			<g stroke="#2e353e">
				{gridMajor.v.map((x) => (
					<path key={x} d={`M${x}.5 185V671`} />
				))}
				{gridMajor.h.map((y) => (
					<path key={y} d={`M6 ${y}.5H1274`} />
				))}
			</g>
			<path d="M563.5 364V471M630.5 364V562" stroke="#3c434c" />
			<path d="M302.5 185V671" stroke="#0d1116" strokeWidth="3" />
			<path d="M302.5 185V671" stroke="#b5b8bc" />

			<g stroke="#1838cc">
				<path d="M71 343L7 478L50 525L99.5 505V457L71 343L47 436L7 478M47 436L99 457" />
				<path d="M71 343L50 525M71 343L99 505" strokeDasharray="8 2" />
			</g>

			<path d="M330 361.5H1274" stroke="#7b83c8" />
			<path d="M330 362.5H1274" stroke="#3c4383" />
			<path d="M330 364H1274" stroke="#6f77ae" strokeWidth="2" />

			<g stroke="#e8eaec">
				<path d="M517 185L455 362M540 185L563 362M554 185L630 362" />
				<path d="M455 506L563 471L630 562L563 654L455 620M455 506L533 562L455 620M563 471L533 562L563 654" />
				<path d="M777 506L847 471L890 562L847 654L777 620M777 506L1001 562L777 620M847 471L1001 562L847 654" />
				<path d="M454.5 506V620M777.5 506V620M533 562.5H630M890 562.5H1001" />
				<path d="M892 185L777 229L890 362L980 185M963 185L847 310" />
			</g>
			<path d="M454.5 365V505" stroke="#1438e0" />
			<path
				d="M533 188v54M533 256v54M533 324v98M533 436v54M533 504v58"
				stroke="#b26012"
				strokeWidth="2"
			/>
			<path
				d="M952 185L921 212M910 220L868 254M858 264L829 288"
				stroke="#b8742c"
			/>
			<path d="M402 185V350" stroke="#1da592" strokeWidth="2" />
			<path d="M911 219A223 223 0 0 1 963 362" stroke="#1fd0c0" />
			<path d="M454 622L440 671" stroke="#2fc79a" />
			<path d="M563 655L558 671" stroke="#d5d8da" />
			<path
				d="M402 362l-3-14h6zM963 362l-3-14h6zM911 219l11 10-5 4zM440 664l15 3-3 5z"
				fill="#2ef4f0"
			/>

			<g
				fill="#fff"
				fontFamily="DejaVu Sans Mono, monospace"
				fontSize="21"
				fontWeight="700"
			>
				{labels.map(([x, y, t]) => (
					<text key={`${x}-${y}`} x={x} y={y}>
						{t}
					</text>
				))}
				{turned.map(([x, y, t]) => (
					<text
						key={t}
						x="-6"
						y="6"
						transform={`translate(${x} ${y}) rotate(50)`}
					>
						{t}
					</text>
				))}
			</g>
			<g
				fill="#fff"
				fontFamily="Lato, sans-serif"
				fontSize="23"
				fontWeight="900"
			>
				{apexLabels.map(([x, y, t]) => (
					<text key={`${x}-${y}`} x={x} y={y}>
						{t}
					</text>
				))}
				<g textAnchor="middle">
					<text y="8" transform="translate(391 250) rotate(-90)">
						50
					</text>
					<text y="8" transform="translate(960 284) rotate(68)">
						40°
					</text>
					<text y="8" transform="translate(496 671) rotate(16)">
						25
					</text>
				</g>
			</g>

			<path
				d="M862 363.5h30M897 363.5h30M894.5 331v30M894.5 366v30M892.5 361.5h4v4h-4z"
				stroke="#f2f3f5"
			/>
			<path
				d="M18.5 618V657.5H59M15.5 654.5h7v7h-7z"
				stroke="#dfe1e4"
			/>
			<g
				fill="#dfe1e4"
				fontFamily="Lato, sans-serif"
				fontSize="15"
				fontWeight="300"
				textAnchor="middle"
			>
				<text x="25" y="615">
					Y
				</text>
				<text x="67" y="657">
					X
				</text>
			</g>
		</g>
	</Drawing>
);

const Cube = () => (
	<ViewCube width="94" height="98" viewBox="0 0 94 98">
		<circle cx="47" cy="48" r="37" fill="none" stroke="#474e56" strokeWidth="8" />
		<path d="M30 31h34v34H30z" fill="#b5b6b5" stroke="#c6c7c6" />
		<path d="M37 38h20v20H37z" fill="#aeb0af" />
		<g
			fill="#c3c8ce"
			fontFamily="Liberation Sans, sans-serif"
			fontSize="13"
			fontWeight="700"
			textAnchor="middle"
		>
			<text x="47" y="15">N</text>
			<text x="47" y="92">S</text>
			<text x="8" y="53">W</text>
			<text x="86" y="53">E</text>
			<text
				x="47"
				y="52"
				fontFamily="Roboto, sans-serif"
				fontSize="9"
				fill="#4a4f54"
			>
				TOP
			</text>
		</g>
	</ViewCube>
);

const Navigation = () => (
	<NavBar role="toolbar" aria-label="Navigation">
		<svg width="24" height="167" viewBox="0 0 24 167" fill="none" stroke="#484e52">
			<path d="M18 3l4 4M22 3l-4 4" />
			<circle cx="12" cy="23" r="8" />
			<circle cx="12" cy="23" r="4" />
			<path d="M12 15h9v8" />
			<path d="M8 64l-4-6 2-1 3 3-2-8 2-1 2 7V49l2 0 1 8 2-7 2 1-1 7 3-4 1 1-4 9-3 3H9z" />
			<path d="M4 72l12 12M16 72L4 84M3 75v-4h4M13 71h4v4M3 81v4h4" />
			<circle cx="17" cy="83" r="4" />
			<path d="M19 86l3 3" strokeWidth="2" />
			<path d="M12 103v16M9 106l3-4 3 4M9 116l3 4 3-4M4 113c-2-5 18-5 16 0M5 110l-2 4h4" />
			<path d="M4 135h4v4H4zM10 135h4v4h-4zM17 135h4v4h-4zM4 142h12v10H4z" />
			<path d="M8 144l5 3-5 3zM11 39h4l-2 2zM11 95h4l-2 2zM11 125h4l-2 2z" fill="#484e52" stroke="none" />
			<circle cx="20" cy="162" r="2" />
		</svg>
	</NavBar>
);

const App = () => (
	<>
		<GlobalStyles />
		<Desktop>
			<Window>
				<TitleBar>
					<AppButton aria-label="Application menu">
						<Logo />
						<Caret $big />
					</AppButton>
					{Object.entries(quick).map(([name, shape]) => (
						<ToolButton key={name} aria-label={name}>
							<Icon shift={0}>{shape}</Icon>
						</ToolButton>
					))}
					<ToolButton $w={12} aria-label="Undo list">
						<Caret />
					</ToolButton>
					<ToolButton $w={17} aria-label="Redo">
						<Icon>
							<path
								d="M15 8L9 4v3c-5 0-7 2-7 5 2-2 4-2 7-2v2z"
								fill="#5a626b"
								stroke="none"
							/>
						</Icon>
					</ToolButton>
					<ToolButton $w={12} aria-label="Redo list">
						<Caret $dim />
					</ToolButton>
					<ToolButton $w={11} aria-label="Customize toolbar">
						<Icon w={7} h={7} shift={0}>
							<path d="M0 0h7v1H0zM0 3h7L4 7H3z" fill={W} stroke="none" />
						</Icon>
					</ToolButton>
					<ShareButton>
						<Icon w={13} h={13}>
							<path d="M0 7l13-6-3 11-4-3-2 3-1-4z" fill={B} stroke="none" />
							<path d="M4 8l8-6-6 7" stroke="#222930" />
						</Icon>
						Share
					</ShareButton>
					<Title>{'Autodesk AutoCAD 2024 - EDUCATIONAL VERSION    Test.dwg'}</Title>
					<Icon w={5} h={8}>
						<path d="M1 0l3 3-3 3z" fill={W} stroke="none" />
					</Icon>
					<SearchBox aria-label="Search" placeholder="Type a keyword or phrase" />
					<ToolButton $w={20} aria-label="Search">
						<Icon>
							<circle cx="7" cy="6" r="4" />
							<path d="M10 9l3 4" strokeWidth="2" />
						</Icon>
					</ToolButton>
					<SignInButton>
						<Icon w={14} h={14} shift={0}>
							<circle cx="7" cy="4" r="3" fill={W} stroke="none" />
							<path d="M1 13c0-4 2-5 6-5s6 1 6 5z" fill={W} stroke="none" />
						</Icon>
						Sign In
						<Caret />
					</SignInButton>
					<ToolButton $w={23} aria-label="Store">
						<Icon>
							<path d="M2 3h2l2 7h7M4 5h10l-2 3H5M7 5v4M10 5v4" />
							<path d="M6 13h2M11 13h2" strokeWidth="2" />
						</Icon>
					</ToolButton>
					<ToolButton $w={26} aria-label="Autodesk App">
						<Icon shift={0}>
							<path d="M8 4l5 8H3z" strokeWidth="2" />
							<path d="M6 2h4v3H6zM1 11h4v3H1zM11 11h4v3h-4z" fill={W} stroke="none" />
						</Icon>
						<Caret />
					</ToolButton>
					<Divider />
					<ToolButton $w={30} aria-label="Help">
						<Icon w={14} h={14} shift={0}>
							<circle cx="7" cy="7" r="7" fill={W} stroke="none" />
							<text
								x="7"
								y="11"
								fill="#222930"
								stroke="none"
								fontSize="11"
								fontWeight="700"
								textAnchor="middle"
							>
								?
							</text>
						</Icon>
						<Caret />
					</ToolButton>
					<WindowButtons $gap={50}>
						<ToolButton $w={37} aria-label="Minimize">
							<Icon w={8} h={8}>
								<path d="M0 4h8" />
							</Icon>
						</ToolButton>
						<ToolButton $w={37} aria-label="Maximize">
							<Icon w={10} h={10}>
								<rect x="1" y="1" width="7" height="7" rx="1" />
							</Icon>
						</ToolButton>
						<ToolButton $w={34} aria-label="Close">
							<Icon w={10} h={10}>
								<path d="M1 1l8 8M9 1L1 9" />
							</Icon>
						</ToolButton>
					</WindowButtons>
				</TitleBar>

				<MenuBar>
					{menus.map((m) => (
						<button key={m}>{m}</button>
					))}
					<WindowButtons>
						<ToolButton $w={25} aria-label="Minimize drawing">
							<Icon w={8} h={8}>
								<path d="M0 4h8" />
							</Icon>
						</ToolButton>
						<ToolButton $w={26} aria-label="Restore drawing">
							<Icon w={10} h={10}>
								<path d="M1 3h5v5H1zM3 3V1h5v5H6" />
							</Icon>
						</ToolButton>
						<ToolButton $w={26} aria-label="Close drawing">
							<Icon w={10} h={10}>
								<path d="M1 1l8 8M9 1L1 9" />
							</Icon>
						</ToolButton>
					</WindowButtons>
				</MenuBar>

				<RibbonTabs>
					{tabs.map((t) => (
						<RibbonTab key={t} $active={t === 'Home'}>
							{t}
						</RibbonTab>
					))}
					<ToolButton $w={52} aria-label="Minimize ribbon">
						<Icon w={13} h={8} shift={0}>
							<path d="M0 0h13v8H0z" fill={W} stroke="none" />
							<path d="M6 3l3 3H4z" fill="#222930" stroke="none" />
						</Icon>
						<Caret />
					</ToolButton>
				</RibbonTabs>

				<RibbonPanels />

				<TabStrip>
					<ToolButton aria-label="Drawings">
						<Burger />
					</ToolButton>
					<ToolButton as="span" $w={10}>
						<Slash />
					</ToolButton>
					<PlainTab $w={33}>Start</PlainTab>
					<SlantTab $w={60}>
						Test*
						<button aria-label="Close Test">
							<Icon w={8} h={8}>
								<path d="M1 1l6 6M7 1L1 7" />
							</Icon>
						</button>
					</SlantTab>
					<ToolButton $w={23} aria-label="New tab">
						<Plus />
					</ToolButton>
					<ToolButton as="span" $w={12}>
						<Slash />
					</ToolButton>
				</TabStrip>

				<Canvas>
					<Pyramid />
					<ViewLabel>[−][Top][2D Wireframe]</ViewLabel>
					<Cube />
					<WcsButton>WCS</WcsButton>
					<Navigation />
					<CommandBar>
						<Icon w={6} h={16} shift={0}>
							<path
								d="M1 2v13M4 2v13"
								strokeWidth="2"
								strokeDasharray="1 1"
							/>
						</Icon>
						<ToolButton $w={14} aria-label="Close command line">
							<Icon w={8} h={8}>
								<path d="M1 1l6 6M7 1L1 7" strokeWidth="2" />
							</Icon>
						</ToolButton>
						<ToolButton $w={22} aria-label="Customize command line">
							<Icon>
								<path d="M3 13l7-7" strokeWidth="2" />
								<path d="M9 2a4 4 0 0 0 4 6l2-3-3 1-1-2 1-3z" fill={W} stroke="none" />
							</Icon>
						</ToolButton>
						<CommandField>
							<Icon w={14} h={11}>
								<path d="M1 1h12v9H1zM1 3h12" stroke="#444b50" />
								<path d="M3 5l2 1-2 2M6 8h3" stroke="#444b50" />
							</Icon>
							<Caret $big />
							<input aria-label="Command" placeholder="Type a command" />
							<Caret $big />
						</CommandField>
					</CommandBar>
				</Canvas>

				<StatusBar>
					<ToolButton aria-label="Layouts">
						<Burger />
					</ToolButton>
					<ToolButton as="span" $w={5} />
					<SlantTab $w={55}>Model</SlantTab>
					<PlainTab $w={44}>Layout1</PlainTab>
					<ToolButton as="span" $w={10}>
						<Slash />
					</ToolButton>
					<PlainTab $w={43}>Layout2</PlainTab>
					<ToolButton as="span" $w={10}>
						<Slash />
					</ToolButton>
					<ToolButton $w={23} aria-label="New layout">
						<Plus />
					</ToolButton>
					<ToolButton as="span" $w={10}>
						<Slash />
					</ToolButton>
					<StatusItems>
						<Coords>7935.2, 1632.1, 0.0</Coords>
						<StatusItem $w={39}>MODEL</StatusItem>
						{statusItems.map((s) => (
							<StatusItem
								key={s.n}
								$w={s.w}
								$on={s.on}
								$caret={s.c}
								aria-label={s.t || s.n}
							>
								{s.i && <SIcon>{s.i}</SIcon>}
								{s.t && <span>{s.t}</span>}
								{s.c && <Caret $big />}
							</StatusItem>
						))}
					</StatusItems>
				</StatusBar>
			</Window>
		</Desktop>
	</>
);

export default App;
